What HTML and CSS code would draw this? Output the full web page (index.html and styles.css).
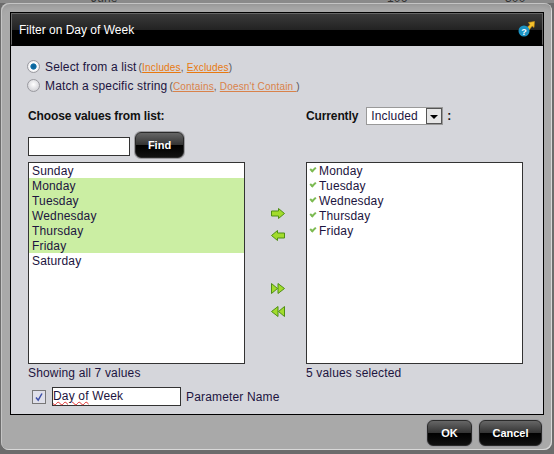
FILE: index.html
```html
<!DOCTYPE html>
<html>
<head>
    <title>Filter on Day of Week</title>
    <link rel="stylesheet" href="styles.css">
</head>
<body>
    <!-- report table showing behind the dialog -->
    <div class="backdrop">
        <span class="back-cell back-month">June</span>
        <span class="back-cell back-a">106</span>
        <span class="back-cell back-b">300</span>
    </div>

    <div class="window">
        <div class="dialog">
            <div class="titlebar">
                <span class="title">Filter on Day of Week</span>
                <svg class="help-icon" width="20" height="18" viewBox="0 0 20 18">
                    <polygon points="10.5,8 14,4.8 12.5,2.5 18.5,1.5 18,7.5 16.2,6 13,10" fill="#f5c22c" stroke="#c98f12" stroke-width="0.6"/>
                    <circle cx="8" cy="11" r="5.5" fill="#1c93c4"/>
                    <text x="8" y="14.5" class="help-mark" text-anchor="middle">?</text>
                </svg>
            </div>
            <div class="content">
                <div class="option">
                    <span class="radio radio-on"></span>
                    <span>Select from a list</span>
                    <span class="hint">(<a href="#">Includes</a>, <a href="#">Excludes</a>)</span>
                </div>
                <div class="option">
                    <span class="radio"></span>
                    <span>Match a specific string</span>
                    <span class="hint">(<a href="#">Contains</a>, <a href="#">Doesn't Contain </a>)</span>
                </div>

                <div class="picker">
                    <div class="col-head">Choose values from list:</div>
                    <div></div>
                    <div class="col-head">
                        Currently
                        <span class="select">
                            <span class="select-value">Included</span>
                            <span class="select-btn"><i class="select-arrow"></i></span>
                        </span>
                        <span class="colon">:</span>
                    </div>

                    <div class="search">
                        <input type="text" class="search-input">
                        <button class="btn btn-find">Find</button>
                    </div>
                    <div></div>
                    <div></div>

                    <ul class="list">
                        <li>Sunday</li>
                        <li class="picked">Monday</li>
                        <li class="picked">Tuesday</li>
                        <li class="picked">Wednesday</li>
                        <li class="picked">Thursday</li>
                        <li class="picked">Friday</li>
                        <li>Saturday</li>
                    </ul>
                    <div class="movers">
                        <svg class="mover" width="14" height="11" viewBox="0 0 14 11"><polygon points="0.5,3 7.5,3 7.5,0.5 13.5,5.5 7.5,10.5 7.5,8 0.5,8"/></svg>
                        <svg class="mover" width="14" height="11" viewBox="0 0 14 11"><polygon points="13.5,3 6.5,3 6.5,0.5 0.5,5.5 6.5,10.5 6.5,8 13.5,8"/></svg>
                        <svg class="mover mover-all" width="14" height="11" viewBox="0 0 14 11"><polygon points="0.5,0.5 6.5,5.5 0.5,10.5"/><polygon points="7,0.5 13.5,5.5 7,10.5"/></svg>
                        <svg class="mover mover-back" width="14" height="11" viewBox="0 0 14 11"><polygon points="13.5,0.5 7.5,5.5 13.5,10.5"/><polygon points="7,0.5 0.5,5.5 7,10.5"/></svg>
                    </div>
                    <ul class="list list-chosen">
                        <li>Monday</li>
                        <li>Tuesday</li>
                        <li>Wednesday</li>
                        <li>Thursday</li>
                        <li>Friday</li>
                    </ul>

                    <div class="caption">Showing all 7 values</div>
                    <div></div>
                    <div class="caption">5 values selected</div>
                </div>

                <div class="param">
                    <span class="checkbox">
                        <svg width="10" height="10" viewBox="0 0 10 10"><path d="M2 5.5 L4.2 8.2 L8 1.5" fill="none" stroke="#3d4fa8" stroke-width="1.5"/></svg>
                    </span>
                    <div class="param-input"><span class="misspelt">Day of</span> Week</div>
                    <span>Parameter Name</span>
                </div>
            </div>
        </div>
        <div class="actions">
            <button class="btn btn-ok">OK</button>
            <button class="btn btn-cancel">Cancel</button>
        </div>
    </div>
</body>
</html>
```

FILE: styles.css
```css
body {
    font-family: "Liberation Sans", Arial, sans-serif;
    font-size: 12px;
    letter-spacing: 0.16px;
    color: #1c1440;
    background: #6c6c6c;
    margin: 0;
    padding: 3px 2px 4px 1px;
    height: 454px;
    box-sizing: border-box;
    overflow: hidden;
}

.backdrop {
    position: absolute;
    top: 0;
    left: 0;
    width: 554px;
    height: 3px;
    overflow: hidden;
    background: #8a8a8a;
}

.back-cell {
    position: absolute;
    top: -9px;
    color: #333;
    font-size: 12px;
}

.back-month { left: 91px; }
.back-a { left: 387px; }
.back-b { left: 505px; }

.window {
    position: relative;
    height: 447px;
    box-sizing: border-box;
    padding: 9px 8px 0 9px;
    background: #a9a9a9;
    border-radius: 8px;
    box-shadow: inset 1px 1px 0 #c4c4c4, inset -1px -1px 0 #d8d8d8, inset 0 8px 6px -6px #8e8e8e;
}

.dialog {
    height: 403px;
    box-sizing: border-box;
    border: 1px solid #000;
    background: #d5d6db;
}

.titlebar {
    height: 33px;
    box-sizing: border-box;
    border: 1px solid #666;
    border-bottom: 2px solid #000;
    background: linear-gradient(#3a3a3a 0, #222 16px, #000 16px);
    display: flex;
    align-items: center;
    justify-content: space-between;
    padding: 2px 6px 0 7px;
}

.title {
    color: #fff;
    font-size: 12px;
    letter-spacing: 0;
}

.help-icon {
    margin-top: -2px;
}

.help-mark {
    fill: #fff;
    font-size: 9px;
    font-weight: bold;
    font-family: "Liberation Sans", Arial, sans-serif;
}

.content {
    padding: 11px 19px 0 17px;
}

.option {
    display: flex;
    align-items: center;
    height: 19px;
}

.radio {
    width: 11px;
    height: 11px;
    border: 1px solid #9a9aa0;
    border-radius: 50%;
    margin-left: -1px;
    margin-right: 5px;
    flex-shrink: 0;
    background: radial-gradient(circle at 50% 40%, #fff, #c6c6cc);
}

.radio-on {
    background: radial-gradient(circle, #0d5f95 0, #0d6fa8 35%, #fff 45%, #d8d8de 100%);
}

.hint {
    font-size: 10px;
    letter-spacing: 0.18px;
    color: #555;
    margin-left: 2px;
    margin-top: 1px;
}

.hint a {
    color: #e8790f;
}

.option + .option .hint a {
    color: #d9824a;
}

.picker {
    display: grid;
    grid-template-columns: 217px 61px 217px;
    grid-template-rows: 18px 33px 206px 18px;
    margin-top: 12px;
}

.col-head {
    font-weight: bold;
    letter-spacing: -0.12px;
    color: #111;
    display: flex;
    align-items: center;
}

.select {
    display: inline-flex;
    align-items: stretch;
    width: 77px;
    height: 18px;
    box-sizing: border-box;
    border: 1px solid #999;
    background: #fff;
    margin-left: 8px;
    font-weight: normal;
    letter-spacing: 0.16px;
    color: #1c1440;
}

.select-value {
    flex: 1;
    padding-left: 4px;
    line-height: 16px;
}

.select-btn {
    width: 16px;
    box-sizing: border-box;
    border: 1px solid #555;
    background: #e6e6e6;
    display: flex;
    align-items: center;
    justify-content: center;
}

.select-arrow {
    width: 0;
    height: 0;
    border-left: 4px solid transparent;
    border-right: 4px solid transparent;
    border-top: 4px solid #000;
    margin-top: 2px;
}

.colon {
    margin-left: 4px;
}

.search {
    display: flex;
    align-items: center;
    gap: 5px;
    margin-top: 6px;
    height: 27px;
}

.search-input {
    width: 102px;
    height: 19px;
    box-sizing: border-box;
    border: 1px solid #333;
    background: #fff;
    padding: 0;
    margin: 3px 0 0;
}

.btn {
    font-family: "Liberation Sans", Arial, sans-serif;
    font-size: 11px;
    font-weight: bold;
    letter-spacing: 0;
    color: #fff;
    padding: 0;
    height: 26px;
    border: 1px solid #2a2a2a;
    border-radius: 6px;
    background: linear-gradient(#666 0, #333 12px, #000 12px, #111 100%);
    box-shadow: 0 0 0 1px #9c9ca0;
}

.btn-find {
    width: 49px;
}

.btn-ok {
    width: 45px;
}

.btn-cancel {
    width: 63px;
}

.list {
    list-style-type: none;
    margin: 4px 0 0;
    padding: 0;
    box-sizing: border-box;
    height: 202px;
    border: 1px solid #333;
    background: #fff;
}

.list li {
    height: 15px;
    line-height: 17px;
    padding-left: 3px;
}

.list li.picked {
    background: #cbeea3;
}

.list-chosen li {
    padding-left: 12px;
    position: relative;
}

.list-chosen li::before {
    content: "";
    position: absolute;
    left: 3px;
    top: 4px;
    width: 4px;
    height: 2px;
    border-left: 2px solid #7cba52;
    border-bottom: 2px solid #7cba52;
    transform: rotate(-45deg);
}

.movers {
    display: flex;
    flex-direction: column;
    align-items: flex-start;
    gap: 11px;
    padding: 50px 0 0 26px;
}

.mover {
    fill: #a2dc2c;
    stroke: #4f8f14;
    stroke-width: 1;
}

.mover-all {
    margin-top: 31px;
}

.mover-back {
    margin-top: 1px;
}

.caption {
    line-height: 18px;
}

.param {
    display: flex;
    align-items: center;
    margin-top: 5px;
    padding-left: 4px;
}

.checkbox {
    width: 12px;
    height: 12px;
    border: 1px solid #777;
    background: #dfe0ea;
    display: flex;
    align-items: center;
    justify-content: center;
    margin-right: 6px;
}

.param-input {
    width: 129px;
    height: 19px;
    line-height: 16px;
    box-sizing: border-box;
    border: 1px solid #333;
    background: #fff;
    margin-right: 5px;
}

.misspelt {
    text-decoration: underline wavy #e03030 1px;
    text-underline-offset: 1px;
}

.actions {
    display: flex;
    justify-content: flex-end;
    gap: 7px;
    margin-top: 5px;
    margin-right: 2px;
}
```
